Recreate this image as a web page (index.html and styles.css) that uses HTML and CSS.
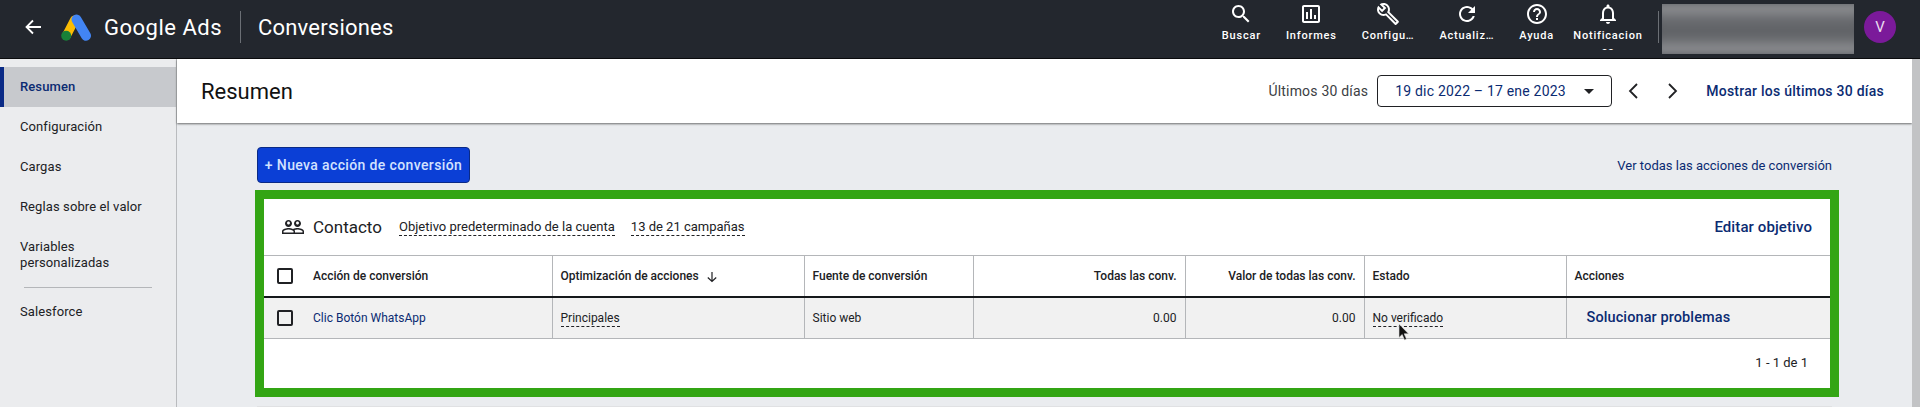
FILE: index.html
```html
<!DOCTYPE html>
<html lang="es">
<head>
<meta charset="utf-8">
<title>Conversiones - Google Ads</title>
<link rel="stylesheet" href="styles.css">
</head>
<body>
<div class="app">
  <header class="topbar">
    <svg class="back" viewBox="0 0 18 18"><path d="M17 9H3M9 2.5 2.5 9 9 15.5" fill="none" stroke="#fff" stroke-width="1.8"/></svg>
    <svg class="logo" viewBox="0 0 30 27">
      <path d="M13.500 6 5.500 21.500" stroke="#fbbc04" stroke-width="9" stroke-linecap="round" fill="none"/>
      <path d="M15.500 5.500 25 21.800" stroke="#4285f4" stroke-width="10" stroke-linecap="round" fill="none"/>
      <circle cx="5.200" cy="21.800" r="5" fill="#188038"/>
    </svg>
    <span class="brand">Google Ads</span>
    <span class="vrule"></span>
    <span class="section">Conversiones</span>
    <nav class="tools">
      <div class="tool"><svg viewBox="0 0 24 24"><path d="M15.5 14h-.79l-.28-.27C15.41 12.59 16 11.11 16 9.5 16 5.91 13.09 3 9.5 3S3 5.91 3 9.5 5.91 16 9.5 16c1.61 0 3.09-.59 4.23-1.57l.27.28v.79l5 4.99L20.49 19l-4.99-5zm-6 0C7.01 14 5 11.99 5 9.5S7.01 5 9.5 5 14 7.01 14 9.5 11.99 14 9.5 14z"/></svg><span>Buscar</span></div>
      <div class="tool"><svg viewBox="0 0 24 24"><path d="M19 3H5c-1.1 0-2 .9-2 2v14c0 1.1.9 2 2 2h14c1.1 0 2-.9 2-2V5c0-1.1-.9-2-2-2zm0 16H5V5h14v14zM7 10h2v7H7zm4-3h2v10h-2zm4 6h2v4h-2z"/></svg><span>Informes</span></div>
      <div class="tool"><svg viewBox="0 0 24 24"><path d="M22.61 18.99l-9.08-9.08c.93-2.34.45-5.1-1.44-7C9.79.61 6.21.4 3.66 2.26L7.5 6.11 6.08 7.52 2.25 3.69C.39 6.23.6 9.82 2.9 12.11c1.86 1.86 4.57 2.35 6.89 1.48l9.11 9.11c.39.39 1.02.39 1.41 0l2.3-2.3c.4-.38.4-1.01 0-1.41zm-3 1.6l-9.46-9.46c-.61.45-1.29.72-2 .82-1.36.2-2.79-.21-3.83-1.25C3.37 9.76 2.93 8.5 3 7.26l3.09 3.09 4.24-4.24-3.09-3.09c1.24-.07 2.49.37 3.44 1.31 1.08 1.08 1.49 2.57 1.24 3.96-.12.71-.42 1.37-.88 1.96l9.45 9.45-.88.88z"/></svg><span>Configu…</span></div>
      <div class="tool"><svg viewBox="0 0 24 24"><path d="M17.65 6.35C16.2 4.9 14.21 4 12 4c-4.42 0-7.99 3.58-7.99 8s3.57 8 7.99 8c3.73 0 6.84-2.55 7.73-6h-2.08c-.82 2.33-3.04 4-5.65 4-3.31 0-6-2.69-6-6s2.69-6 6-6c1.66 0 3.14.69 4.22 1.78L13 11h7V4l-2.35 2.35z"/></svg><span>Actualiz…</span></div>
      <div class="tool"><svg viewBox="0 0 24 24"><path d="M11 18h2v-2h-2v2zm1-16C6.48 2 2 6.48 2 12s4.48 10 10 10 10-4.48 10-10S17.52 2 12 2zm0 18c-4.41 0-8-3.59-8-8s3.59-8 8-8 8 3.59 8 8-3.59 8-8 8zm0-14c-2.21 0-4 1.79-4 4h2c0-1.1.9-2 2-2s2 .9 2 2c0 2-3 1.75-3 5h2c0-2.25 3-2.5 3-5 0-2.21-1.79-4-4-4z"/></svg><span>Ayuda</span></div>
      <div class="tool tool-notif"><svg viewBox="0 0 24 24"><path d="M12 22c1.1 0 2-.9 2-2h-4c0 1.1.9 2 2 2zm6-6v-5c0-3.07-1.63-5.64-4.5-6.32V4c0-.83-.67-1.5-1.5-1.5s-1.5.67-1.5 1.5v.68C7.64 5.36 6 7.92 6 11v5l-2 2v1h16v-1l-2-2zm-2 1H8v-6c0-2.48 1.51-4.5 4-4.5s4 2.02 4 4.5v6z"/></svg><span>Notificaciones</span></div>
    </nav>
    <span class="vrule vrule-account"></span>
    <div class="account-clip"><div class="account"></div></div>
    <div class="avatar">V</div>
  </header>
  <div class="body">
    <aside class="sidebar">
      <a class="nav-item is-active">Resumen</a>
      <a class="nav-item">Configuración</a>
      <a class="nav-item">Cargas</a>
      <a class="nav-item">Reglas sobre el valor</a>
      <a class="nav-item nav-item-two">Variables personalizadas</a>
      <div class="nav-rule"></div>
      <a class="nav-item nav-item-last">Salesforce</a>
    </aside>
    <main class="main">
      <div class="titlebar">
        <h1>Resumen</h1>
        <div class="range">
          <span class="range-label">Últimos 30 días</span>
          <div class="range-select"><span>19 dic 2022 – 17 ene 2023</span><i class="caret"></i></div>
          <svg class="chev chev-first" viewBox="0 0 12 18"><path d="M10 2 3 9l7 7" fill="none" stroke="#202124" stroke-width="1.8"/></svg>
          <svg class="chev" viewBox="0 0 12 18"><path d="m2 2 7 7-7 7" fill="none" stroke="#202124" stroke-width="1.8"/></svg>
          <a class="range-link">Mostrar los últimos 30 días</a>
        </div>
      </div>
      <div class="content">
        <div class="toolbar">
          <button class="primary">+ Nueva acción de conversión</button>
          <a class="all-link">Ver todas las acciones de conversión</a>
        </div>
        <section class="highlight">
          <div class="card-head">
            <svg class="people" viewBox="0 0 24 17"><path d="M16.5 9c-1.2 0-3.07.34-4.5 1-1.43-.67-3.3-1-4.5-1C5.33 9 1 10.08 1 12.25V15h22v-2.75C23 10.08 18.67 9 16.5 9zm-4 4.5h-10v-1.25c0-.54 2.56-1.75 5-1.75s5 1.21 5 1.75v1.25zm9 0H14v-1.25c0-.46-.2-.86-.52-1.22.88-.3 1.96-.53 3.02-.53 2.44 0 5 1.21 5 1.75v1.25zM7.5 8C9.43 8 11 6.43 11 4.5S9.43 1 7.5 1 4 2.57 4 4.5 5.57 8 7.5 8zm0-5.5C8.33 2.5 9 3.17 9 4S8.33 5.5 7.5 5.5 6 4.83 6 4s.67-1.5 1.5-1.5zm9 5.500C18.43 8 20 6.43 20 4.5S18.43 1 16.5 1 13 2.57 13 4.5 14.57 8 16.5 8zm0-5.5c.83 0 1.5.67 1.5 1.5s-.67 1.5-1.5 1.5S15 4.83 15 4s.67-1.5 1.5-1.5z"/></svg>
            <span class="goal">Contacto</span>
            <span class="dashed meta">Objetivo predeterminado de la cuenta</span>
            <span class="dashed meta">13 de 21 campañas</span>
            <a class="edit">Editar objetivo</a>
          </div>
          <table class="grid">
            <colgroup>
              <col class="c1"><col class="c2"><col class="c3"><col class="c4"><col class="c5"><col class="c6"><col class="c7">
            </colgroup>
            <thead>
              <tr>
                <th class="first"><span class="box"></span>Acción de conversión</th>
                <th>Optimización de acciones<svg class="sort" viewBox="0 0 12 12"><path d="M6 1v9.5M1.8 6.5 6 10.5l4.2-4" fill="none" stroke="#202124" stroke-width="1.2"/></svg></th>
                <th>Fuente de conversión</th>
                <th class="num">Todas las conv.</th>
                <th class="num">Valor de todas las conv.</th>
                <th>Estado</th>
                <th>Acciones</th>
              </tr>
            </thead>
            <tbody>
              <tr>
                <td class="first"><span class="box"></span><a class="row-link">Clic Botón WhatsApp</a></td>
                <td><span class="dashed">Principales</span></td>
                <td>Sitio web</td>
                <td class="num">0.00</td>
                <td class="num">0.00</td>
                <td class="status"><span class="dashed">No verificado</span>
                  <svg class="cursor" viewBox="0 0 11 17"><path d="M1 0v13.500l3.200-3 2.300 5.500 2-.9-2.300-5.300H10.500z" fill="#111" stroke="#ddd" stroke-width=".6"/></svg>
                </td>
                <td><a class="fix">Solucionar problemas</a></td>
              </tr>
            </tbody>
          </table>
          <div class="pager">1 - 1 de 1</div>
        </section>
        <div class="next-card"></div>
      </div>
    </main>
    <div class="scrollbar"></div>
  </div>
</div>
</body>
</html>
```
FILE: styles.css
```css
* { box-sizing: border-box; }
html, body { margin: 0; height: 100%; overflow: hidden; }
body { font-family: Roboto, "Liberation Sans", sans-serif; color: #202124; background: #eaecef; }
a { color: inherit; text-decoration: none; }

.app { height: 407px; display: flex; flex-direction: column; overflow: hidden; }

/* top bar */
.topbar { height: 59px; flex: none; display: flex; align-items: center; background: #23272e; border-bottom: 1px solid #0b0c0e; color: #fff; padding: 0 0 4px 24px; }
.back { width: 18px; height: 18px; flex: none; }
.logo { width: 30px; height: 27px; margin-left: 19px; flex: none; }
.brand { font-size: 22px; margin-left: 13px; letter-spacing: .5px; width: 118px; white-space: nowrap; }
.vrule { width: 1px; height: 32px; background: #6b6f75; margin-left: 18px; flex: none; }
.section { font-size: 22px; margin-left: 17px; letter-spacing: .2px; white-space: nowrap; }
.tools { margin-left: auto; display: flex; align-items: flex-start; gap: 25px; height: 50px; overflow: hidden; align-self: flex-start; padding-top: 2px; }
.tool { display: flex; flex-direction: column; align-items: center; font-size: 11px; font-weight: 500; letter-spacing: .8px; line-height: 16px; }
.tool svg { width: 24px; height: 24px; fill: #fff; margin-bottom: 2px; flex: none; }
.tool-notif { width: 70px; margin-left: -6px; word-break: break-all; text-align: center; }
.vrule-account { margin-left: 15px; }
.account-clip { width: 192px; height: 50px; margin: 3px 0 0 3px; overflow: hidden; flex: none; }
.account { width: 100%; height: 100%; filter: blur(5px); transform: scale(1.1); background: linear-gradient(180deg, #a9aaac, #6a6c70 30%, #5c5e62 60%, #a4a5a8), linear-gradient(90deg, #8d9095, #a6a8ac); }
.avatar { width: 32px; height: 32px; margin: 0 24px 0 10px; border-radius: 50%; background: #7b1a9a; color: #e8dcef; display: flex; align-items: center; justify-content: center; font-size: 15px; flex: none; }

/* body */
.body { flex: 1; display: flex; min-height: 0; }
.sidebar { width: 177px; flex: none; padding-top: 8px; background: #ebecee; border-right: 1px solid #b9bbbe; font-size: 13px; letter-spacing: .1px; }
.nav-item { display: flex; align-items: center; height: 40px; padding: 0 20px 1px; color: #202124; }
.is-active { background: #c7c9cd; color: #0b2b72; font-weight: 500; border-left: 4px solid #0a2a86; padding-left: 16px; }
.nav-item-two { height: 47px; line-height: 16px; padding-top: 9px; padding-right: 40px; }
.nav-rule { height: 1px; margin: 13px 24px 0; background: #b4b6b9; }
.nav-item-last { height: 48px; }

.main { flex: 1; min-width: 0; display: flex; flex-direction: column; }
.titlebar { height: 64px; flex: none; display: flex; align-items: center; justify-content: space-between; padding: 0 28px 0 24px; background: #fff; box-shadow: 0 1px 2px rgba(0,0,0,.55); }
.titlebar h1 { margin: 0; font-size: 22px; font-weight: 400; color: #111; }
.range { display: flex; align-items: center; }
.range-label { font-size: 14px; letter-spacing: .2px; color: #3c4043; margin-right: 9px; }
.range-select { width: 235px; height: 32px; display: flex; align-items: center; justify-content: space-between; padding: 0 17px; border: 1px solid #202124; border-radius: 4px; color: #0b2b72; font-size: 14px; letter-spacing: .2px; }
.caret { width: 0; height: 0; border-left: 5px solid transparent; border-right: 5px solid transparent; border-top: 5px solid #202124; }
.chev { width: 12px; height: 18px; margin-left: 28px; }
.chev-first { margin-left: 15px; }
.range-link { font-size: 14px; font-weight: 500; letter-spacing: .25px; color: #0b2b72; margin-left: 27px; }

.content { flex: 1; min-height: 0; padding: 24px 73px 0 78px; }
.toolbar { height: 36px; display: flex; align-items: center; justify-content: space-between; padding: 0 7px 0 2px; }
.primary { height: 36px; width: 213px; padding: 0; background: #0b3fd6; border: 1px solid #0a2a86; border-radius: 4px; color: #d3e2ff; font: 500 14px Roboto, sans-serif; letter-spacing: .37px; }
.all-link { font-size: 13px; color: #0b2b72; }

.highlight { margin-top: 7px; height: 207px; border: 9px solid #33a514; background: #fff; }
.card-head { height: 56px; display: flex; align-items: center; padding-left: 17px; }
.people { width: 24px; height: 17px; flex: none; fill: #202124; }
.goal { font-size: 17px; margin-left: 8px; width: 86px; }
.meta { font-size: 13px; margin-right: 16px; }
.dashed { border-bottom: 1px dashed #202124; padding-bottom: 1px; }
.edit { margin-left: auto; margin-right: 18px; font-size: 15px; font-weight: 500; letter-spacing: .1px; color: #0b2b72; }

.grid { width: 100%; border-collapse: collapse; table-layout: fixed; font-size: 12px; border-top: 1px solid #b4b6b9; }
.c1 { width: 288px; } .c2 { width: 252px; } .c3 { width: 169px; } .c4 { width: 212px; } .c5 { width: 179px; } .c6 { width: 202px; }
.grid th, .grid td { padding: 0 8px; text-align: left; border-left: 1px solid #b4b6b9; white-space: nowrap; }
.grid th { height: 41px; font-weight: 500; border-bottom: 2px solid #15181b; }
.grid td { height: 42px; background: #f1f1f1; border-bottom: 1px solid #b4b6b9; }
.grid .first { border-left: 0; padding-left: 49px; position: relative; }
.grid .num { text-align: right; }
.box { position: absolute; left: 13px; top: 50%; margin-top: -8px; width: 16px; height: 16px; border: 2px solid #202124; border-radius: 2px; }
.sort { width: 12px; height: 12px; margin-left: 7px; vertical-align: -3px; }
.row-link { color: #0b2b72; }
.status { position: relative; }
.cursor { position: absolute; left: 33px; top: 26px; width: 11px; height: 17px; }
.fix { font-size: 14.500px; font-weight: 500; letter-spacing: .1px; color: #0b2b72; margin-left: 12px; }
.pager { text-align: right; padding: 16px 22px 0 0; font-size: 13px; }
.next-card { height: 12px; margin: 9px 7px 0 2px; background: #e0e1e3; }
.scrollbar { width: 8px; flex: none; background: #c2c3c5; }
```
